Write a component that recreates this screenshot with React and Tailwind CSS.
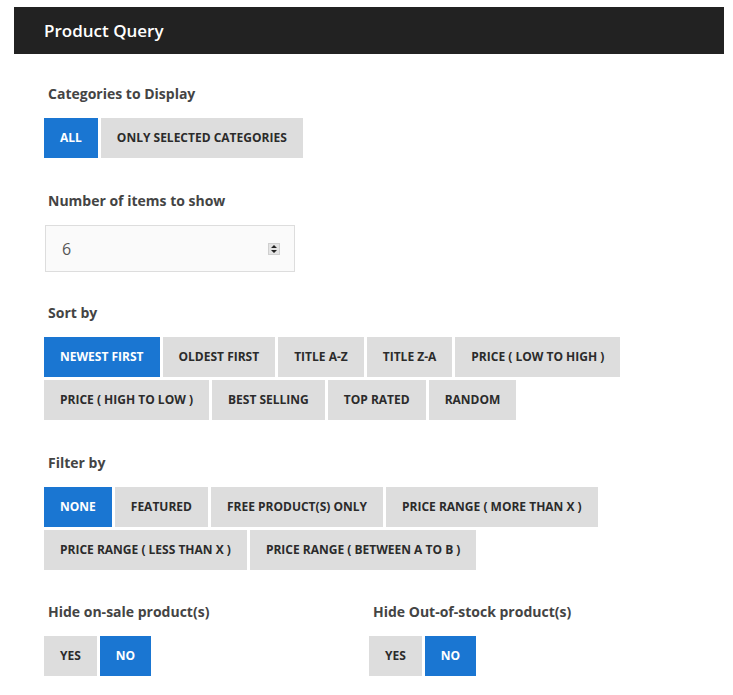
import React, { useState } from 'react';

const font = { fontFamily: '"Open Sans", "Liberation Sans", sans-serif' };

function Toggle({ options, value, onChange }) {
    return (
        <div className="flex flex-wrap gap-[3px]">
            {options.map((opt) => (
                <button
                    key={opt}
                    onClick={() => onChange(opt)}
                    className={`h-10 px-4 text-xs font-bold uppercase ${value === opt ? 'bg-[#1a76d2] text-white' : 'bg-[#dddddd] text-[#2b2b2b]'}`}
                >
                    {opt}
                </button>
            ))}
        </div>
    );
}

function Label({ children }) {
    return <div className="pl-1 text-sm font-bold text-[#444] mb-[14px]">{children}</div>;
}

export default function App() {
    const [cat, setCat] = useState('All');
    const [count, setCount] = useState(6);
    const [sort, setSort] = useState('Newest First');
    const [filter, setFilter] = useState('None');
    const [onSale, setOnSale] = useState('No');
    const [outStock, setOutStock] = useState('No');

    return (
        <div className="min-h-screen bg-white pt-[7px] px-[14px]" style={font}>
            <div className="w-[710px]">
                <header className="h-[47px] bg-[#222222] flex items-center px-[30px]">
                    <h2 className="text-[17px] font-semibold text-white">Product Query</h2>
                </header>

                <main className="px-[30px] pt-[30px]">
                    <section className="mb-[33px]">
                        <Label>Categories to Display</Label>
                        <Toggle options={['All', 'Only Selected Categories']} value={cat} onChange={setCat} />
                    </section>

                    <section className="mb-[31px]">
                        <Label>Number of items to show</Label>
                        <div className="ml-px mt-px w-[250px] h-[47px] border border-[#dddddd] bg-[#fafafa] flex items-center justify-between pl-4 pr-[14px]">
                            <span className="text-base text-[#555]">{count}</span>
                            <div className="flex flex-col items-center justify-center w-[12px] h-[12px] bg-[#e4e4e4] border border-[#cfcfcf]">
                                <svg width="8" height="10" viewBox="0 0 8 10">
                                    <path d="M4 1 L7 4 L1 4 Z M4 9 L7 6 L1 6 Z" fill="#222" />
                                </svg>
                            </div>
                        </div>
                    </section>

                    <section className="mb-[33px]">
                        <Label>Sort by</Label>
                        <Toggle
                            options={['Newest First', 'Oldest First', 'Title A-Z', 'Title Z-A', 'Price ( Low to High )', 'Price ( High to Low )', 'Best Selling', 'Top Rated', 'Random']}
                            value={sort}
                            onChange={setSort}
                        />
                    </section>

                    <section className="mb-[32px]">
                        <Label>Filter by</Label>
                        <Toggle
                            options={['None', 'Featured', 'Free Product(s) Only', 'Price Range ( More than X )', 'Price Range ( Less than X )', 'Price Range ( Between A to B )']}
                            value={filter}
                            onChange={setFilter}
                        />
                    </section>

                    <section className="grid grid-cols-2">
                        <div>
                            <Label>Hide on-sale product(s)</Label>
                            <Toggle options={['Yes', 'No']} value={onSale} onChange={setOnSale} />
                        </div>
                        <div>
                            <Label>Hide Out-of-stock product(s)</Label>
                            <Toggle options={['Yes', 'No']} value={outStock} onChange={setOutStock} />
                        </div>
                    </section>
                </main>
            </div>
        </div>
    );
}
